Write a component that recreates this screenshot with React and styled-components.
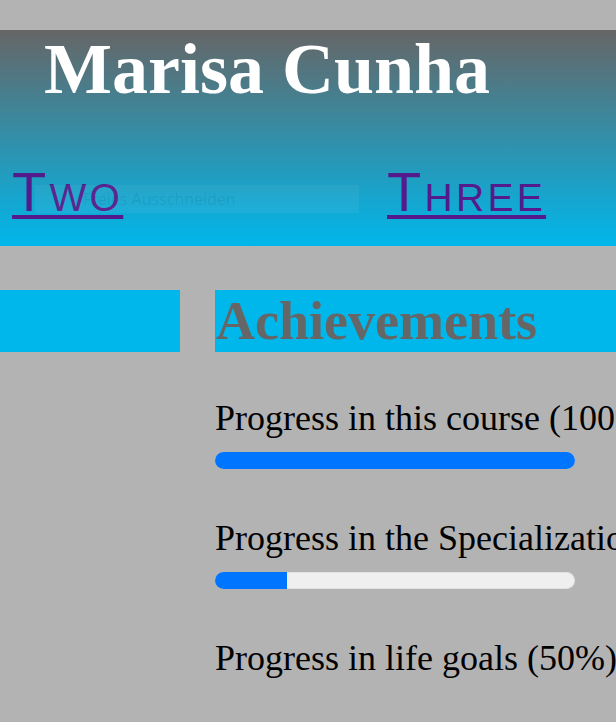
import React from "react";
import styled, { createGlobalStyle } from "styled-components";

const GlobalStyle = createGlobalStyle`
  html, body {
    margin: 0;
    padding: 0;
    background: #b3b3b3;
    overflow: hidden;
  }
  body {
    font-family: "Liberation Serif", "Times New Roman", serif;
  }
`;

const Page = styled.div`
  padding-top: 30px;
  min-height: 722px;
  box-sizing: border-box;
`;

const Header = styled.header`
  position: relative;
  height: 216px;
  box-sizing: border-box;
  padding-top: 3px;
  background: linear-gradient(to bottom, #666666 0%, #00b7eb 100%);
  display: flex;
  flex-direction: column;
`;

const Title = styled.h1`
  margin: 0;
  padding-left: 44px;
  font-family: "Liberation Serif", "Times New Roman", serif;
  font-size: 72px;
  line-height: 72px;
  font-weight: bold;
  color: #ffffff;
  white-space: nowrap;
`;

const Nav = styled.nav`
  margin-top: 59px;
  display: grid;
  grid-template-columns: 375px auto;
  padding-left: 12px;
`;

const NavLink = styled.a`
  justify-self: start;
  font-family: "Liberation Sans", Arial, sans-serif;
  font-size: 56px;
  line-height: 56px;
  font-variant: small-caps;
  letter-spacing: 3.3px;
  color: #551a8b;
  text-decoration: underline;
  text-decoration-thickness: 4px;
  text-underline-offset: 4px;
`;

const SnipHint = styled.div`
  position: absolute;
  left: 35px;
  top: 155px;
  width: 324px;
  height: 28px;
  background: rgba(255, 255, 255, 0.05);
  display: flex;
  align-items: center;
  padding-left: 48px;
  box-sizing: border-box;
  font-family: "Open Sans", "Noto Sans", sans-serif;
  font-size: 16px;
  color: rgba(0, 70, 110, 0.12);
  pointer-events: none;
  white-space: nowrap;
`;

const Main = styled.main`
  margin-top: 44px;
  display: grid;
  grid-template-columns: 180px 1fr;
  column-gap: 35px;
  align-items: start;
`;

const Aside = styled.aside`
  height: 62px;
  background: #00b7eb;
`;

const Content = styled.section`
  display: flex;
  flex-direction: column;
  min-width: 0;
`;

const SectionTitle = styled.h2`
  margin: 0;
  height: 62px;
  background: #00b7eb;
  font-family: "Liberation Serif", "Times New Roman", serif;
  font-size: 54px;
  line-height: 62px;
  font-weight: bold;
  color: #666666;
  white-space: nowrap;
  padding-left: 1px;
`;

const List = styled.div`
  margin-top: 44px;
  display: flex;
  flex-direction: column;
  gap: 47px;
`;

const Item = styled.div`
  display: flex;
  flex-direction: column;
  gap: 13px;
`;

const Label = styled.p`
  margin: 0;
  padding-top: 2px;
  font-family: "Liberation Serif", "Times New Roman", serif;
  font-size: 36px;
  line-height: 41px;
  color: #000000;
  white-space: nowrap;
`;

const Track = styled.div`
  width: 360px;
  height: 17px;
  border-radius: 9px;
  background: #efefef;
  overflow: hidden;
  box-shadow: inset 0 0 0 1px rgba(0, 0, 0, 0.05);
`;

const Fill = styled.div`
  height: 100%;
  background: #0075ff;
`;

const items = [
  { label: "Progress in this course (100%)", value: 100, bar: true },
  { label: "Progress in the Specialization (20%)", value: 20, bar: true },
  { label: "Progress in life goals (50%)", value: 50, bar: false },
];

export default function App() {
  return (
    <Page>
      <GlobalStyle />
      <Header>
        <Title>Marisa Cunha</Title>
        <Nav>
          <NavLink href="#">Two</NavLink>
          <NavLink href="#">Three</NavLink>
        </Nav>
        <SnipHint>Freies Ausschneiden</SnipHint>
      </Header>
      <Main>
        <Aside />
        <Content>
          <SectionTitle>Achievements</SectionTitle>
          <List>
            {items.map((it) => (
              <Item key={it.label}>
                <Label>{it.label}</Label>
                {it.bar && (
                  <Track>
                    <Fill style={{ width: `${it.value}%` }} />
                  </Track>
                )}
              </Item>
            ))}
          </List>
        </Content>
      </Main>
    </Page>
  );
}
